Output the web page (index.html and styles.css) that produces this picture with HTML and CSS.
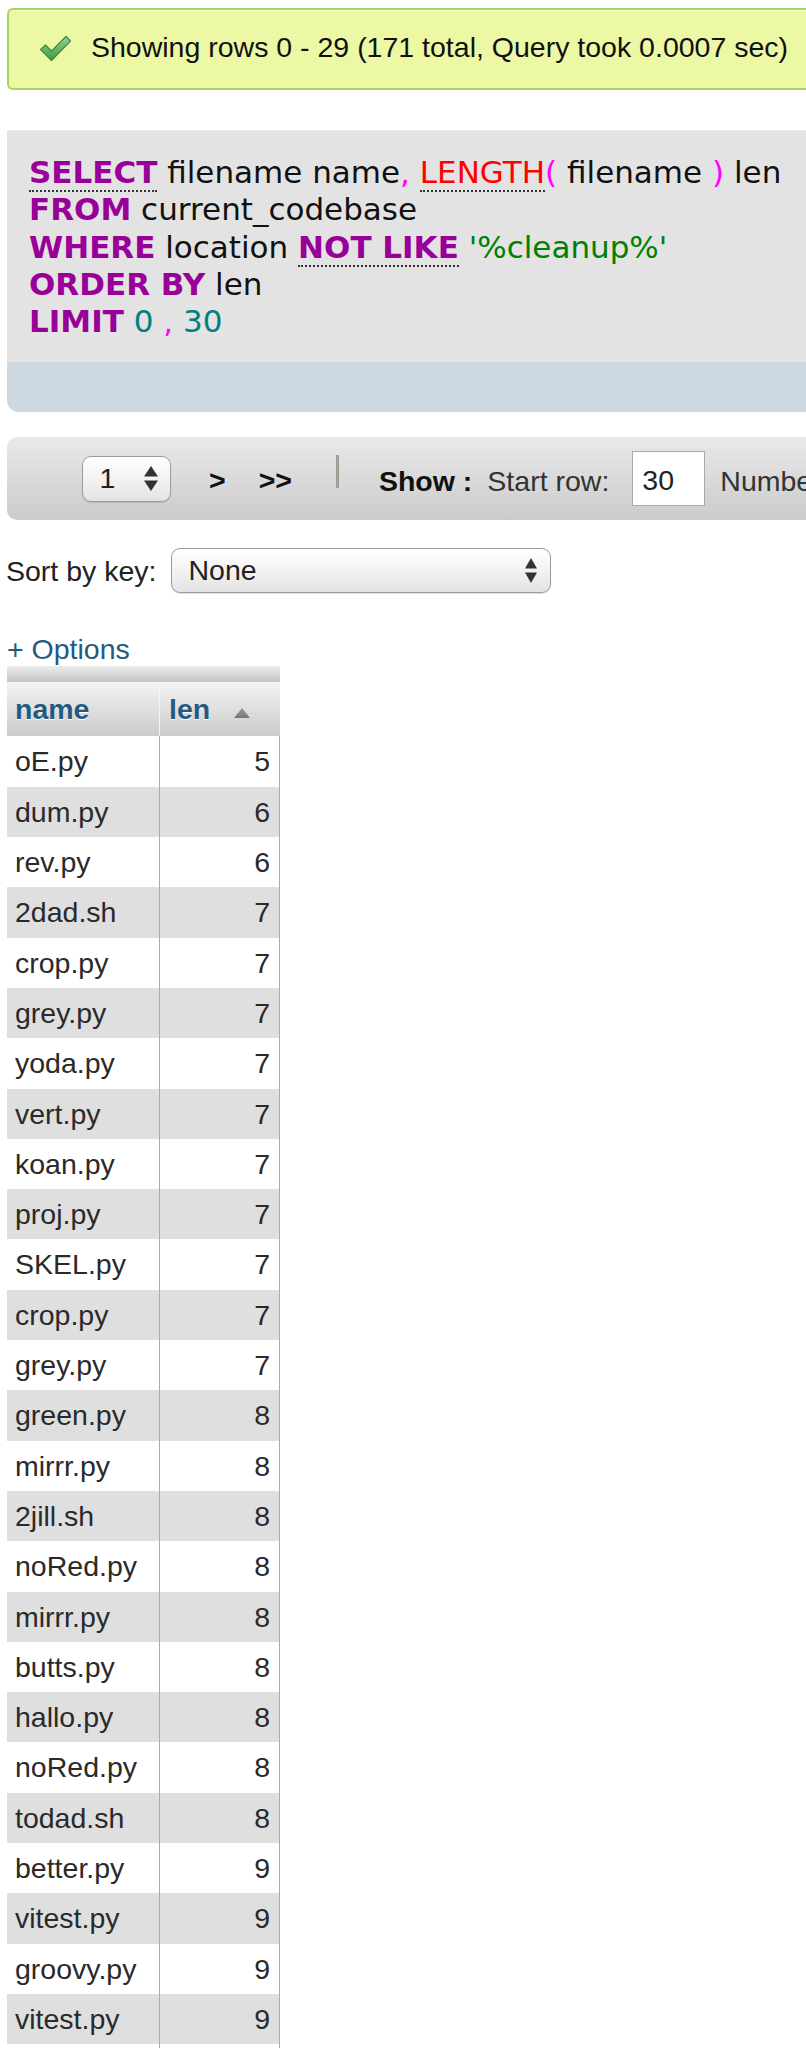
FILE: index.html
```html
<!DOCTYPE html>
<html>
<head>
<meta charset="utf-8">
<link rel="stylesheet" href="styles.css">
</head>
<body>
<div class="page">
  <div class="msg">
    <svg class="check" width="33" height="27" viewBox="0 0 33 27">
      <defs>
        <linearGradient id="cg" x1="0" y1="0" x2="0" y2="1">
          <stop offset="0" stop-color="#8fd68f"/>
          <stop offset="1" stop-color="#3e9a45"/>
        </linearGradient>
      </defs>
      <polygon points="1.5,14.5 6.5,10 12.5,16 27,1.5 31.5,6 12.5,25.5" fill="url(#cg)" stroke="#3f8a46" stroke-width="1.2" stroke-linejoin="round"/>
    </svg>
    <span class="msg-text">Showing rows 0 - 29 (171 total, Query took 0.0007 sec)</span>
  </div>

  <div class="sqlbox">
    <div class="sql">
      <div class="ln"><span class="kw link">SELECT</span> filename name<span class="pu">,</span> <span class="fn link">LENGTH</span><span class="pu">(</span> filename <span class="pu">)</span> len</div>
      <div class="ln"><span class="kw">FROM</span> current_codebase</div>
      <div class="ln"><span class="kw">WHERE</span> location <span class="kw link">NOT LIKE</span> <span class="str">'%cleanup%'</span></div>
      <div class="ln"><span class="kw">ORDER BY</span> len</div>
      <div class="ln"><span class="kw">LIMIT</span> <span class="num">0</span> <span class="pu">,</span> <span class="num">30</span></div>
    </div>
    <div class="sqlfoot"></div>
  </div>

  <div class="navbar">
    <div class="sel sel-page"><span>1</span>
      <svg class="updown" width="14" height="25" viewBox="0 0 14 25"><polygon points="7,0 14,10.5 0,10.5" fill="#333"/><polygon points="0,14.5 14,14.5 7,25" fill="#333"/></svg>
    </div>
    <span class="navlink nl1">&gt;</span>
    <span class="navlink nl2">&gt;&gt;</span>
    <span class="sep"></span>
    <span class="show">Show :</span>
    <span class="lbl lbl-start">Start row:</span>
    <span class="inp">30</span>
    <span class="lbl lbl-num">Number of rows:</span>
  </div>

  <div class="sortrow">
    <span class="sortlbl">Sort by key:</span>
    <div class="sel sel-sort"><span>None</span>
      <svg class="updown" width="12" height="25" viewBox="0 0 12 25"><polygon points="6,0 12,10.5 0,10.5" fill="#333"/><polygon points="0,14.5 12,14.5 6,25" fill="#333"/></svg>
    </div>
  </div>

  <div class="options">+ Options</div>

  <table class="grid">
    <colgroup><col class="col1"><col class="col2"></colgroup>
    <thead>
      <tr class="band"><th colspan="2"></th></tr>
      <tr class="head">
        <th class="c1">name</th>
        <th class="c2">len<svg class="sorticon" width="16" height="10" viewBox="0 0 16 10"><defs><linearGradient id="sg" x1="0" y1="0" x2="0" y2="1"><stop offset="0" stop-color="#9a9a9a"/><stop offset="1" stop-color="#777"/></linearGradient></defs><polygon points="8,0 16,10 0,10" fill="url(#sg)"/></svg></th>
      </tr>
    </thead>
    <tbody>
      <tr><td class="c1">oE.py</td><td class="c2">5</td></tr>
      <tr class="alt"><td class="c1">dum.py</td><td class="c2">6</td></tr>
      <tr><td class="c1">rev.py</td><td class="c2">6</td></tr>
      <tr class="alt"><td class="c1">2dad.sh</td><td class="c2">7</td></tr>
      <tr><td class="c1">crop.py</td><td class="c2">7</td></tr>
      <tr class="alt"><td class="c1">grey.py</td><td class="c2">7</td></tr>
      <tr><td class="c1">yoda.py</td><td class="c2">7</td></tr>
      <tr class="alt"><td class="c1">vert.py</td><td class="c2">7</td></tr>
      <tr><td class="c1">koan.py</td><td class="c2">7</td></tr>
      <tr class="alt"><td class="c1">proj.py</td><td class="c2">7</td></tr>
      <tr><td class="c1">SKEL.py</td><td class="c2">7</td></tr>
      <tr class="alt"><td class="c1">crop.py</td><td class="c2">7</td></tr>
      <tr><td class="c1">grey.py</td><td class="c2">7</td></tr>
      <tr class="alt"><td class="c1">green.py</td><td class="c2">8</td></tr>
      <tr><td class="c1">mirrr.py</td><td class="c2">8</td></tr>
      <tr class="alt"><td class="c1">2jill.sh</td><td class="c2">8</td></tr>
      <tr><td class="c1">noRed.py</td><td class="c2">8</td></tr>
      <tr class="alt"><td class="c1">mirrr.py</td><td class="c2">8</td></tr>
      <tr><td class="c1">butts.py</td><td class="c2">8</td></tr>
      <tr class="alt"><td class="c1">hallo.py</td><td class="c2">8</td></tr>
      <tr><td class="c1">noRed.py</td><td class="c2">8</td></tr>
      <tr class="alt"><td class="c1">todad.sh</td><td class="c2">8</td></tr>
      <tr><td class="c1">better.py</td><td class="c2">9</td></tr>
      <tr class="alt"><td class="c1">vitest.py</td><td class="c2">9</td></tr>
      <tr><td class="c1">groovy.py</td><td class="c2">9</td></tr>
      <tr class="alt"><td class="c1">vitest.py</td><td class="c2">9</td></tr>
      <tr><td class="c1">&nbsp;</td><td class="c2">&nbsp;</td></tr>
    </tbody>
  </table>
</div>
</body>
</html>
```

FILE: styles.css
```css
html, body {
  margin: 0;
  padding: 0;
  background: #ffffff;
}
body {
  font-family: "Liberation Sans", Arial, sans-serif;
  font-size: 28.5px;
  color: #222;
}
.page {
  width: 806px;
  overflow: hidden;
}

/* success message */
.msg {
  box-sizing: border-box;
  margin: 8px 0 0 7px;
  width: 900px;
  height: 82px;
  border: 2px solid #a6d35e;
  border-radius: 6px;
  background: #ecf8a3;
  box-shadow: inset 0 1px 0 #f7fdd2;
  display: flex;
  align-items: center;
  padding: 0 0 4px 30px;
}
.check {
  flex: none;
  display: block;
  margin-top: 3px;
}
.msg-text {
  flex: none;
  margin-left: 19px;
  color: #111;
  white-space: nowrap;
}

/* sql box */
.sqlbox {
  margin: 40px 0 0 7px;
  width: 900px;
  border-radius: 0 0 0 12px;
  overflow: hidden;
  background: #e3e3e3;
  border-top: 1px solid #ececec;
}
.sql {
  padding: 23px 0 22px 22px;
  font-family: "DejaVu Sans", Verdana, sans-serif;
  font-size: 31px;
  line-height: 37.3px;
  color: #111;
}
.ln { white-space: nowrap; }
.kw { color: #990099; font-weight: bold; }
.fn { color: #ff0000; }
.pu { color: #ff00ff; }
.str { color: #008000; }
.num { color: #008080; }
.link { border-bottom: 2px dotted #333; }
.sqlfoot {
  height: 50px;
  background: #ced8e0;
}

/* navigation bar */
.navbar {
  box-sizing: border-box;
  margin: 25px 0 0 7px;
  width: 900px;
  height: 83px;
  border-radius: 10px;
  background: linear-gradient(#e9e9e9, #cbcbcb);
  display: flex;
  align-items: center;
  padding-left: 75px;
  white-space: nowrap;
}
.navbar > * {
  flex: none;
}
.sel {
  box-sizing: border-box;
  display: flex;
  align-items: center;
  justify-content: space-between;
  border: 1.5px solid #9c9c9c;
  border-radius: 9px;
  background: linear-gradient(#ffffff, #f1f1f1 55%, #e3e3e3);
  box-shadow: 0 1px 1px rgba(0, 0, 0, 0.12);
  color: #222;
  padding: 0 12.5px 0 16.5px;
}
.updown { display: block; flex: none; }
.sel-page {
  width: 89px;
  height: 46px;
}
.navlink {
  font-weight: bold;
  color: #111;
  margin-top: 4px;
}
.nl1 { margin-left: 38px; }
.nl2 { margin-left: 33px; }
.sep {
  align-self: flex-start;
  margin: 18px 0 0 44px;
  width: 3px;
  height: 33px;
  background: #a39e96;
}
.show {
  font-weight: bold;
  color: #111;
  margin-left: 40px;
  margin-top: 5px;
}
.lbl {
  color: #333;
  margin-top: 5px;
}
.lbl-start { margin-left: 15px; }
.inp {
  box-sizing: border-box;
  margin-left: 23px;
  width: 73px;
  height: 55px;
  border: 1px solid #a9a9a9;
  background: #ffffff;
  display: flex;
  align-items: center;
  padding: 3px 0 0 9px;
  color: #222;
}
.lbl-num { margin-left: 15px; }

/* sort row */
.sortrow {
  margin-top: 28px;
  height: 45px;
  display: flex;
  align-items: center;
  padding-left: 6px;
}
.sortrow > * {
  flex: none;
}
.sortlbl {
  color: #222;
  margin-top: 2px;
}
.sel-sort {
  margin-left: 14.5px;
  width: 380px;
  height: 45px;
}

/* options link */
.options {
  margin-top: 39px;
  padding-left: 7px;
  line-height: 34px;
  color: #235a81;
}

/* data grid */
.grid {
  border-collapse: separate;
  border-spacing: 0;
  table-layout: fixed;
  width: 273px;
  margin-left: 7px;
}
.col1 { width: 153px; }
.col2 { width: 120px; }
.grid th, .grid td {
  padding: 0;
  box-sizing: border-box;
  white-space: nowrap;
}
.band th {
  height: 16px;
  background: linear-gradient(#ededed, #c5c5c5);
}
.head th {
  height: 54px;
  text-align: left;
  font-weight: bold;
  color: #235a81;
  text-shadow: 0 1px 0 #ffffff;
  background: linear-gradient(#f3f3f3, #cbcbcb);
  border-top: 1px solid #f7f7f7;
  vertical-align: middle;
}
.head th.c1 {
  padding-left: 8px;
  border-right: 1px solid #f4f4f4;
}
.head th.c2 {
  padding-left: 9px;
  border-right: 1px solid transparent;
}
.sorticon {
  margin-left: 24px;
  vertical-align: 1px;
}
.grid td {
  line-height: 50.3px;
  height: 50.3px;
  color: #2a2a2a;
  background: #ffffff;
}
.grid tr.alt td {
  background: #dfdfdf;
}
.grid td.c1 {
  padding-left: 8px;
  border-right: 1px solid #ababab;
}
.grid td.c2 {
  text-align: right;
  padding-right: 9px;
  border-right: 1px solid #ababab;
}
```
